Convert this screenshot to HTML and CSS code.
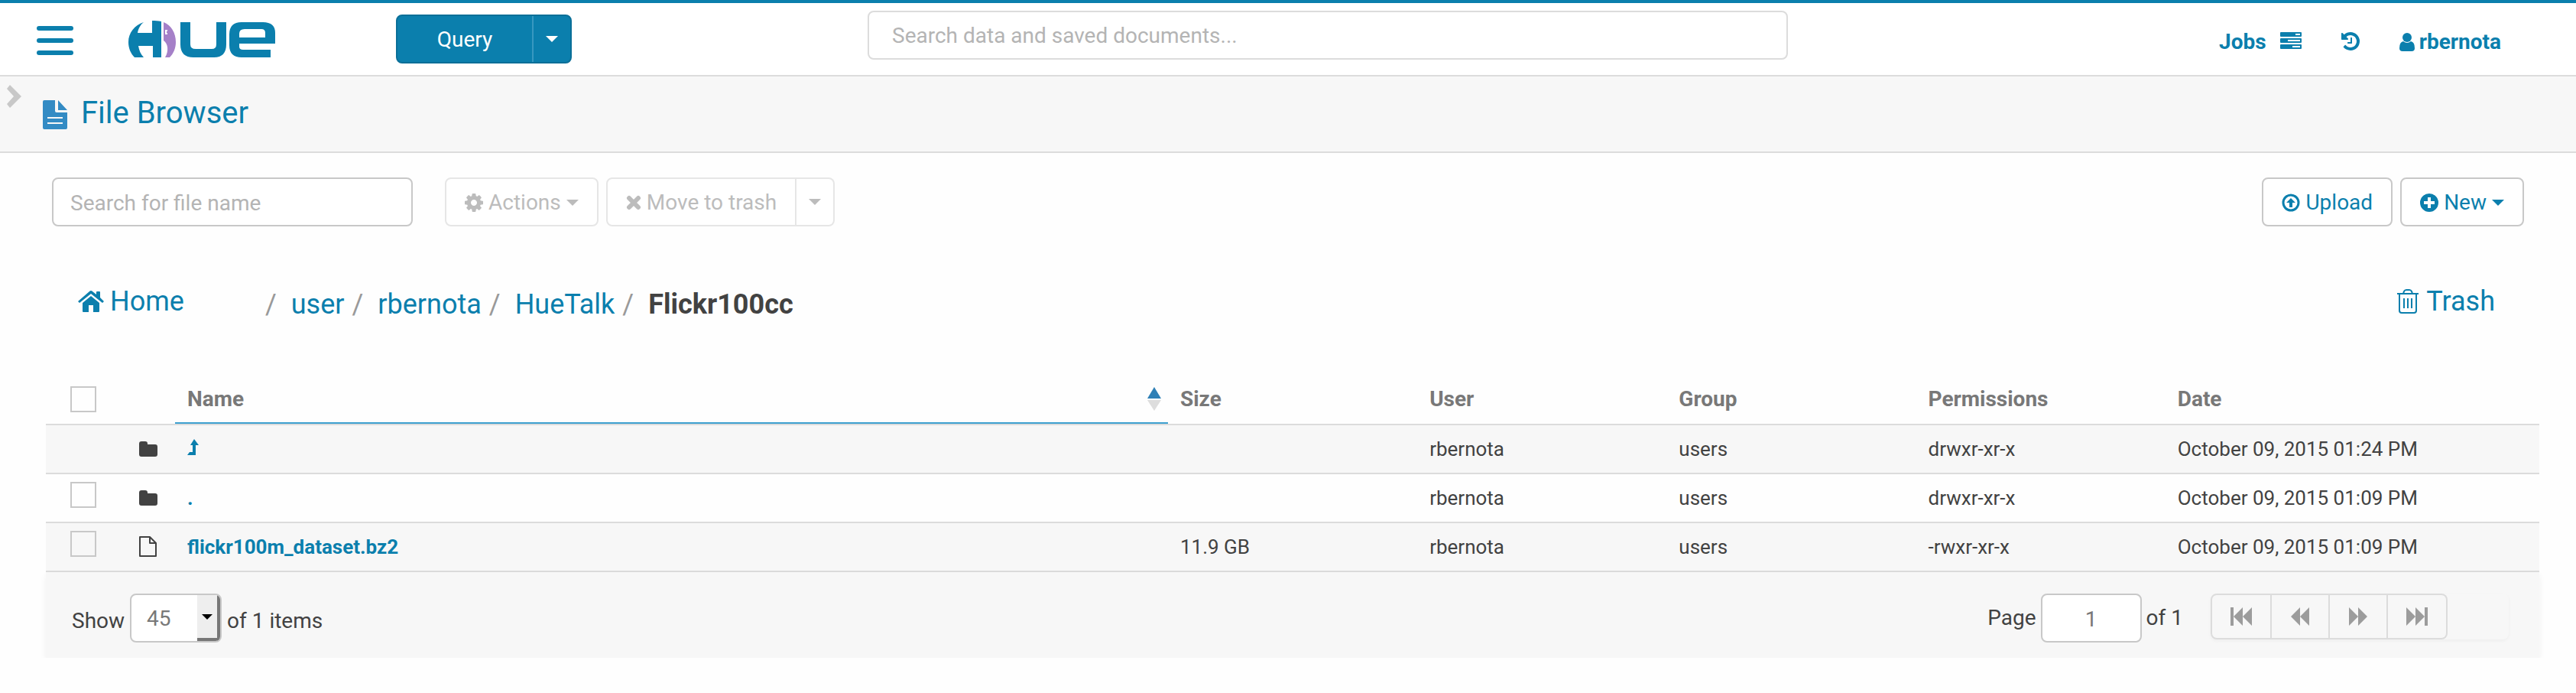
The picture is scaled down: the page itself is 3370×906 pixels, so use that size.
FILE: index.html
```html
<!DOCTYPE html>
<html lang="en">
<head>
<meta charset="utf-8">
<title>Hue - File Browser</title>
<link rel="stylesheet" href="styles.css">
</head>
<body>
<header class="topbar">
  <button class="hamburger" type="button" aria-label="Menu"><span></span><span></span><span></span></button>
  <a class="logo" href="#" aria-label="Hue">
    <svg width="192" height="48" viewBox="0 0 192 48">
      <g fill="#0b7fad">
        <path d="M20 2C8 6 0 16 0 28c0 8 3 15 8 20h12c-4-4-6-9-7-15h19v15h11V1C39 0 35 0 31 0v16H12c1-6 4-11 8-14z"/>
        <path d="M68 2h13v29q0 6 7 6h21q6 0 6-6V2h13v29q0 17-16 17H85Q68 48 68 31z"/>
        <path fill-rule="evenodd" d="M148 2h28q16 0 16 14v14h-47v4q0 4 5 4h36v10h-38q-16 0-16-16V18q0-16 16-16zm4 9q-7 0-7 6v5h34v-6q0-5-5-5z"/>
      </g>
      <path fill="#a580c8" d="M46 2c10 4 16 14 16 26 0 8-3 15-8 20h-6c5-8 4-18-2-22z"/>
      <path fill="none" stroke="#fff" stroke-width="2" d="M51 13h-2v4h2"/>
    </svg>
  </a>
  <div class="query-group">
    <button class="query-main" type="button">Query</button>
    <button class="query-more" type="button" aria-label="More editors"><span class="caret"></span></button>
  </div>
  <input class="input global-search" type="text" placeholder="Search data and saved documents..." aria-label="Search data and saved documents">
  <nav class="usernav">
    <a href="#">Jobs</a>
    <a class="nav-tasks" href="#" aria-label="Job list"><svg width="28" height="22" viewBox="0 0 28 22"><path fill="currentColor" fill-rule="evenodd" d="M1 0h26q1 0 1 1v4q0 1-1 1H1q-1 0-1-1V1q0-1 1-1zm19 2v2h6V2zM1 8h26q1 0 1 1v4q0 1-1 1H1q-1 0-1-1V9q0-1 1-1zm9 2v2h16v-2zM1 16h26q1 0 1 1v4q0 1-1 1H1q-1 0-1-1v-4q0-1 1-1zm15 2v2h10v-2z"/></svg></a>
    <a class="nav-history" href="#" aria-label="History"><svg width="24" height="24" viewBox="0 0 1536 1536"><path fill="currentColor" d="M1536 768q0 156-61 298t-164 245-245 164-298 61q-172 0-327-72.500t-264-204.500q-7-10-6.500-22.500t8.500-20.500l137-138q10-9 25-9 16 2 23 12 73 95 179 147t225 52q104 0 198.500-40.500t163.500-109.500 109.500-163.500 40.500-198.500-40.500-198.500-109.500-163.500-163.500-109.500-198.500-40.500q-98 0-188 35.500t-160 101.500l137 138q31 30 14 69-17 40-59 40h-448q-26 0-45-19t-19-45v-448q0-42 40-59 39-17 69 14l130 129q107-101 244.500-156.500t284.500-55.500q156 0 298 61t245 164 164 245 61 298zM896 480v448q0 14-9 23t-23 9h-320q-14 0-23-9t-9-23v-64q0-14 9-23t23-9h224v-352q0-14 9-23t23-9h64q14 0 23 9t9 23z"/></svg></a>
    <a class="nav-user" href="#"><svg width="20" height="24" viewBox="0 0 20 24"><circle cx="10" cy="6" r="6" fill="currentColor"/><path fill="currentColor" d="M5 11q5 4 10 0 5 1 5 9 0 4-4 4H4q-4 0-4-4 0-8 5-9z"/></svg>rbernota</a>
  </nav>
</header>

<div class="titlebar">
  <button class="expander" type="button" aria-label="Show assist panel"><svg width="20" height="30" viewBox="0 0 20 30"><path fill="#c8c8c8" d="M4 0l15 15L4 30 0 25l9-10L0 5z"/></svg></button>
  <h1><a href="#"><svg width="32" height="38" viewBox="0 0 32 38"><path fill="#338bc4" fill-rule="evenodd" d="M2 0h14v14q0 2 2 2h14v20q0 2-2 2H2q-2 0-2-2V2q0-2 2-2zm4 22v2h20v-2zm0 7v2h20v-2zM20 0l12 13H20z"/></svg>File Browser</a></h1>
</div>

<main class="content">
  <div class="toolbar">
    <input class="input file-search" type="text" placeholder="Search for file name" aria-label="Search for file name">
    <button class="btn" type="button" disabled><svg width="24" height="24" viewBox="0 0 1536 1536"><path fill="currentColor" d="M1024 768q0-106-75-181t-181-75-181 75-75 181 75 181 181 75 181-75 75-181zm512-109v222q0 12-8 23t-20 13l-185 28q-19 54-39 91 35 50 107 138 10 12 10 25t-9 23q-27 37-99 108t-94 71q-12 0-26-9l-138-108q-44 23-91 38-16 136-29 186-7 28-36 28h-222q-14 0-24.500-8.500t-11.500-21.500l-28-184q-49-16-90-37l-141 107q-10 9-25 9-14 0-25-11-126-114-165-168-7-10-7-23 0-12 8-23 15-21 51-66.500t54-70.500q-27-50-41-99l-183-27q-13-2-21-12.500t-8-23.500v-222q0-12 8-23t19-13l186-28q14-46 39-92-40-57-107-138-10-12-10-24 0-10 9-23 26-36 98.500-107.500t94.500-71.500q13 0 26 10l138 107q44-23 91-38 16-136 29-186 7-28 36-28h222q14 0 24.500 8.500t11.500 21.500l28 184q49 16 90 37l142-107q9-9 24-9 13 0 25 10 129 119 165 170 7 8 7 22 0 12-8 23-15 21-51 66.500t-54 70.500q26 50 41 98l183 28q13 2 21 12.500t8 23.500z"/></svg>Actions<span class="caret"></span></button>
    <div class="btn-group">
      <button class="btn" type="button" disabled><svg width="20" height="20" viewBox="0 0 20 20"><path stroke="currentColor" stroke-width="6" stroke-linecap="round" d="M4 4l12 12M16 4L4 16"/></svg>Move to trash</button>
      <button class="btn btn-drop" type="button" disabled aria-label="More trash options"><span class="caret"></span></button>
    </div>
    <div class="toolbar-right">
      <button class="btn btn-live" type="button"><svg width="24" height="24" viewBox="0 0 24 24"><circle cx="12" cy="12" r="10" fill="none" stroke="currentColor" stroke-width="3"/><path fill="currentColor" d="M12 6l6 6h-4v6h-4v-6H6z"/></svg>Upload</button>
      <button class="btn btn-live" type="button"><svg width="24" height="24" viewBox="0 0 24 24"><path fill="currentColor" fill-rule="evenodd" d="M12 0a12 12 0 1 1 0 24 12 12 0 0 1 0-24zm-2 5v5H5v4h5v5h4v-5h5v-4h-5V5z"/></svg>New<span class="caret"></span></button>
    </div>
  </div>

  <nav class="crumbs" aria-label="Path">
    <a class="crumb-home" href="#"><svg width="34" height="28" viewBox="0 0 34 28"><path fill="currentColor" d="M17 7l11 9v11q0 1-1 1h-7v-9h-6v9H7q-1 0-1-1V16z"/><path fill="currentColor" d="M17 0q1 0 2 1l5 4V2q0-1 1-1h3q1 0 1 1v7l5 5-2 2L17 4 2 16l-2-2L15 1q1-1 2-1z"/></svg>Home</a>
    <ol>
      <li><a href="#">user</a></li>
      <li><a href="#">rbernota</a></li>
      <li><a href="#">HueTalk</a></li>
      <li><strong>Flickr100cc</strong></li>
    </ol>
    <a class="crumb-trash" href="#"><svg width="28" height="32" viewBox="0 0 28 32"><g fill="none" stroke="currentColor" stroke-width="2"><path d="M0 6h28M8 6l1-3q1-2 3-2h4q2 0 3 2l1 3M3 6v22q0 3 3 3h16q3 0 3-3V6M9 12v13M14 12v13M19 12v13"/></g></svg>Trash</a>
  </nav>

  <table class="files">
    <colgroup><col class="c-check"><col class="c-icon"><col class="c-name"><col class="c-tenth"><col class="c-tenth"><col class="c-tenth"><col class="c-tenth"><col class="c-date"></colgroup>
    <thead>
      <tr>
        <th class="pick"><input type="checkbox" aria-label="Select all"></th>
        <th></th>
        <th class="sorted"><div class="sort-head">Name<svg width="20" height="32" viewBox="0 0 20 32"><path fill="#2f80b6" d="M10 0l9 15H1z"/><path fill="#ddd" d="M1 17h18l-9 14z"/></svg></div></th>
        <th>Size</th><th>User</th><th>Group</th><th>Permissions</th><th>Date</th>
      </tr>
    </thead>
    <tbody>
      <tr>
        <td></td>
        <td class="icon"><svg width="24" height="22" viewBox="0 0 24 22"><path fill="#424242" d="M3 1h5q3 0 3 3v1h10q3 0 3 3v10q0 3-3 3H3q-3 0-3-3V4q0-3 3-3z"/></svg></td>
        <td><a href="#" aria-label="Parent directory"><svg width="16" height="22" viewBox="0 0 16 22"><path fill="currentColor" d="M9 0l6 8h-4v13H0l3-4h4V8H4z"/></svg></a></td>
        <td></td><td>rbernota</td><td>users</td><td>drwxr-xr-x</td><td>October 09, 2015 01:24 PM</td>
      </tr>
      <tr>
        <td class="pick"><input type="checkbox" aria-label="Select this directory"></td>
        <td class="icon"><svg width="24" height="22" viewBox="0 0 24 22"><path fill="#424242" d="M3 1h5q3 0 3 3v1h10q3 0 3 3v10q0 3-3 3H3q-3 0-3-3V4q0-3 3-3z"/></svg></td>
        <td><a href="#">.</a></td>
        <td></td><td>rbernota</td><td>users</td><td>drwxr-xr-x</td><td>October 09, 2015 01:09 PM</td>
      </tr>
      <tr>
        <td class="pick"><input type="checkbox" aria-label="Select flickr100m_dataset.bz2"></td>
        <td class="icon"><svg width="24" height="28" viewBox="0 0 24 28"><path fill="none" stroke="#424242" stroke-width="2" stroke-linejoin="round" d="M1 1h13l8 8v17H1zM14 1v8h8"/></svg></td>
        <td><a href="#">flickr100m_dataset.bz2</a></td>
        <td>11.9 GB</td><td>rbernota</td><td>users</td><td>-rwxr-xr-x</td><td>October 09, 2015 01:09 PM</td>
      </tr>
    </tbody>
  </table>

  <footer class="pager">
    <div class="pager-size">
      <label for="page-size">Show</label>
      <div class="select-wrap">
        <select id="page-size"><option>45</option></select>
        <span class="select-arrow"></span>
      </div>
      <span>of 1 items</span>
    </div>
    <div class="pager-nav">
      <label for="page-no">Page</label>
      <input class="input page-input" id="page-no" type="text" value="1">
      <span>of 1</span>
      <div class="pager-buttons">
        <button type="button" disabled aria-label="First page"><svg width="28" height="24" viewBox="0 0 28 24"><path fill="currentColor" d="M0 0h4v24H0zM4 12L16 0v24zM16 12L28 0v24z"/></svg></button>
        <button type="button" disabled aria-label="Previous page"><svg width="24" height="24" viewBox="0 0 24 24"><path fill="currentColor" d="M0 12L12 0v24zM12 12L24 0v24z"/></svg></button>
        <button type="button" disabled aria-label="Next page"><svg width="24" height="24" viewBox="0 0 24 24"><path fill="currentColor" d="M24 12L12 0v24zM12 12L0 0v24z"/></svg></button>
        <button type="button" disabled aria-label="Last page"><svg width="28" height="24" viewBox="0 0 28 24"><path fill="currentColor" d="M24 0h4v24h-4zM24 12L12 0v24zM12 12L0 0v24z"/></svg></button>
      </div>
    </div>
  </footer>
</main>
</body>
</html>
```
FILE: styles.css
```css
* { box-sizing: border-box; }

body {
  margin: 0;
  background: #fefefe;
  color: #424242;
  font: 28px/40px Roboto, "Liberation Sans", sans-serif;
}

a { color: #0b7fad; text-decoration: none; }
button, input, select { font: inherit; color: inherit; }
button { background: none; border: 0; padding: 0; }
svg { display: block; flex: none; }

.caret {
  border: 8px solid transparent;
  border-top-color: currentColor;
  border-bottom: 0;
}

.input {
  height: 64px;
  padding: 2px 22px 0;
  border: 2px solid #c8c8c8;
  border-radius: 8px;
  background: #fff;
}
.input::placeholder { color: #b4b4b4; opacity: 1; }

/* Top bar */
.topbar {
  display: flex;
  align-items: center;
  height: 100px;
  padding: 0 98px 0 48px;
  border-top: 4px solid #0b7fad;
  border-bottom: 2px solid #dcdcdc;
  background: #fff;
}
.hamburger {
  display: flex;
  flex-direction: column;
  gap: 10px;
  width: 48px;
  margin-right: 72px;
  padding-top: 4px;
}
.hamburger span { height: 6px; border-radius: 3px; background: #0b7fad; }
.logo { margin-right: 158px; }
.query-group {
  display: flex;
  width: 230px;
  height: 64px;
  margin-right: 387px;
  border: 2px solid #0a6f98;
  border-radius: 8px;
  background: #0b7fad;
  color: #fff;
}
.query-main { flex: 1; padding-top: 2px; border-right: 2px solid #3898c0; }
.query-more { display: flex; align-items: center; justify-content: center; width: 48px; }
.global-search { width: 1204px; padding: 0 30px; border-color: #dcdcdc; margin-bottom: 10px; }
.usernav { display: flex; align-items: center; margin-left: auto; padding-top: 8px; font-weight: bold; }
.nav-tasks { margin-left: 18px; padding-bottom: 4px; }
.nav-history { margin-left: 52px; padding-bottom: 2px; }
.nav-user { display: flex; align-items: center; gap: 6px; margin-left: 52px; }

/* Title bar */
.titlebar {
  display: flex;
  align-items: flex-start;
  height: 100px;
  border-bottom: 2px solid #dcdcdc;
  background: #f7f7f7;
}
.expander { width: 56px; padding: 11px 0 0 9px; }
.titlebar h1 { margin: 0; padding-top: 24px; font-size: 40px; font-weight: normal; line-height: 48px; }
.titlebar h1 a { display: flex; align-items: center; gap: 18px; }
.titlebar h1 svg { margin-top: 4px; }

/* Toolbar */
.content { padding: 32px 48px 0 60px; }
.toolbar { display: flex; padding: 0 20px 0 8px; }
.file-search { width: 472px; margin-right: 42px; }
.btn {
  display: flex;
  align-items: center;
  gap: 7px;
  height: 64px;
  padding: 2px 24px 0;
  border: 2px solid #e6e6e6;
  border-radius: 8px;
  background: #fff;
  color: #bcbcbc;
}
.btn-live { border-color: #c8c8c8; color: #0b7fad; }
.btn-group { display: flex; margin-left: 10px; }
.btn-group .btn:first-child { border-radius: 8px 0 0 8px; }
.btn-group .btn-drop { width: 50px; padding: 0 16px; border-left: 0; border-radius: 0 8px 8px 0; }
.toolbar-right { display: flex; gap: 10px; margin-left: auto; }

/* Breadcrumbs */
.crumbs {
  display: flex;
  align-items: flex-start;
  padding: 74px 58px 0 42px;
  font-size: 36px;
  line-height: 48px;
}
.crumb-home, .crumb-trash { display: flex; align-items: center; gap: 10px; }
.crumb-home { gap: 8px; }
.crumb-trash { margin-left: auto; }
.crumbs ol { display: flex; margin: 0; padding: 4px 0 0 106px; list-style: none; }
.crumbs li::before { content: "/"; margin: 0 19px 0 10px; color: #999; }
.crumbs li:first-child::before { margin-left: 0; }
.crumbs strong { font-weight: bold; }

/* File table */
.files {
  width: 100%;
  margin-top: 62px;
  border-collapse: separate;
  border-spacing: 0;
  table-layout: fixed;
}
.c-check { width: 106px; }
.c-icon { width: 63px; }
.c-tenth { width: 10%; }
.c-date { width: 15%; }
.files th, .files td {
  height: 64px;
  padding: 0 16px;
  border-bottom: 2px solid #dcdcdc;
  text-align: left;
}
.files th { height: 72px; padding-top: 6px; color: #787878; font-weight: bold; }
.files td { font-size: 26px; }
.files td a { display: inline-block; font-weight: bold; }
.files tbody tr:nth-child(odd) { background: #f7f7f7; }
.files th.sorted { box-shadow: inset 0 -2px #3da0cf; }
.sort-head { display: flex; align-items: center; justify-content: space-between; margin-right: -8px; }
.files .pick { padding: 6px 0 0 32px; }
.files td.pick { padding: 0 0 8px 32px; }
.files .icon { padding: 0 0 0 16px; }
.pick input {
  display: block;
  appearance: none;
  width: 34px;
  height: 34px;
  margin: 0;
  border: 2px solid #c8c8c8;
}

/* Pager */
.pager {
  display: flex;
  justify-content: space-between;
  align-items: flex-start;
  height: 112px;
  padding: 28px 40px 0 34px;
  background: #f7f7f7;
  box-shadow: 0 4px 8px rgba(0, 0, 0, 0.06);
}
.pager-size, .pager-nav { display: flex; align-items: center; gap: 6px; }
.pager-size { gap: 7px; }
.pager-size label, .pager-size > span { padding-top: 8px; }
.select-wrap {
  display: grid;
  grid-template-columns: 1fr 30px;
  width: 120px;
  height: 64px;
  overflow: hidden;
  border: 2px solid #c8c8c8;
  border-radius: 8px;
  background: #fff;
}
.select-wrap select {
  appearance: none;
  grid-area: 1 / 1 / 2 / 3;
  border: 0;
  padding: 2px 20px 0;
  background: transparent;
  color: #787878;
}
.select-arrow {
  display: flex;
  grid-area: 1 / 2;
  align-items: center;
  justify-content: center;
  border-right: 4px solid #777;
  border-bottom: 4px solid #777;
  background: #eee;
  pointer-events: none;
}
.select-arrow::before { content: ""; border: 7px solid transparent; border-top-color: #000; border-bottom: 0; }
.page-input { width: 132px; color: #787878; text-align: center; }
.pager-buttons {
  display: flex;
  align-self: flex-start;
  width: 390px;
  height: 60px;
  margin-left: 30px;
  border-radius: 8px;
  box-shadow: 0 2px 4px rgba(0, 0, 0, 0.04);
}
.pager-buttons button {
  display: flex;
  align-items: center;
  justify-content: center;
  width: 76px;
  border: 2px solid #dcdcdc;
  border-left: 0;
  color: #9c9c9c;
}
.pager-buttons button:first-child { width: 80px; border-left: 2px solid #dcdcdc; border-radius: 8px 0 0 8px; }
.pager-buttons button:last-child { width: 78px; border-radius: 0 8px 8px 0; }
```
